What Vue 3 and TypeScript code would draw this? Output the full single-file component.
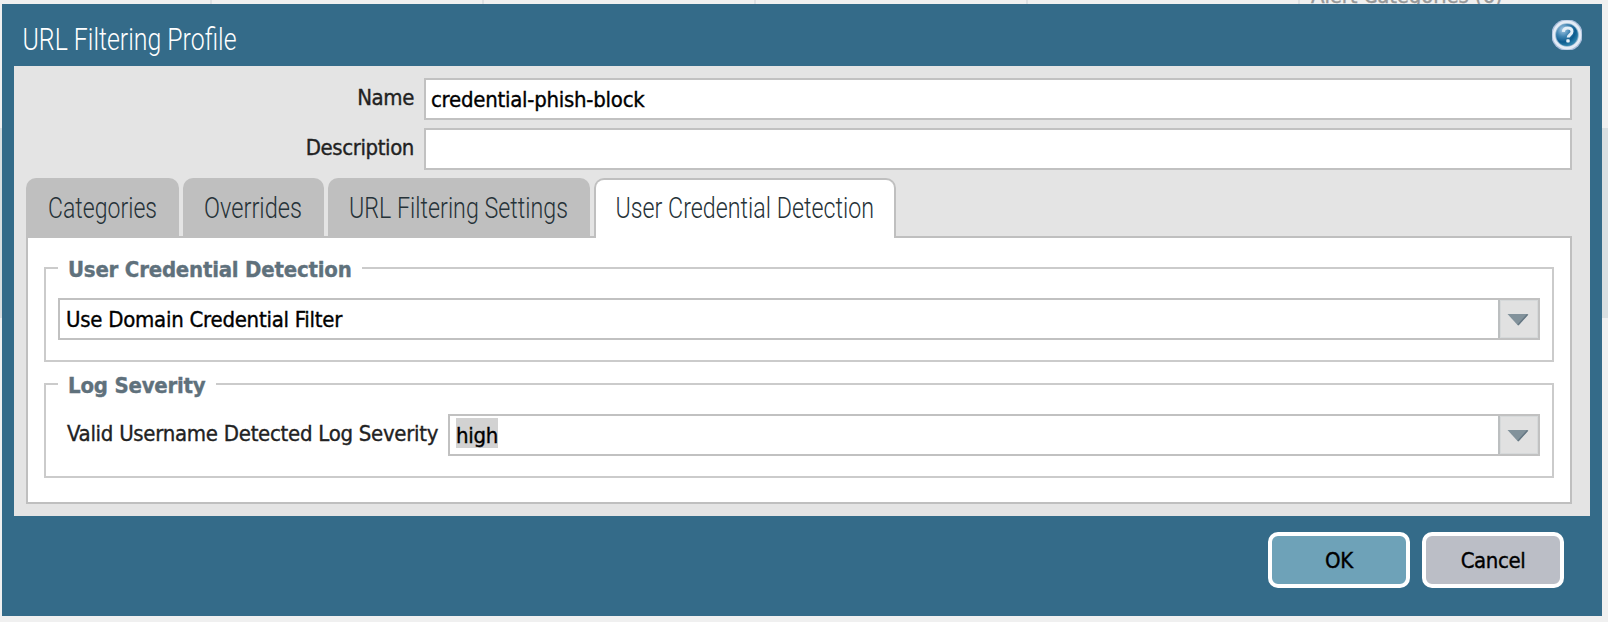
<script setup lang="ts">
import { ref } from 'vue'

interface Tab {
  id: string
  label: string
  width: number
  textX: number
  textLength: number
}

const tabs: Tab[] = [
  { id: 'categories', label: 'Categories', width: 153, textX: 22, textLength: 109 },
  { id: 'overrides', label: 'Overrides', width: 141, textX: 21, textLength: 98 },
  { id: 'settings', label: 'URL Filtering Settings', width: 262, textX: 21, textLength: 219 },
  { id: 'credential', label: 'User Credential Detection', width: 302, textX: 21.5, textLength: 258.5 },
]

const activeTab = ref('credential')
const name = ref('credential-phish-block')
const description = ref('')
const detectionMode = ref('Use Domain Credential Filter')
const severity = ref('high')
</script>

<template>
  <div class="page">
    <div class="backdrop">
      <div class="head-row">
        <span class="head-cell first"></span>
        <span class="head-cell"></span>
        <span class="head-cell"></span>
        <span class="head-cell"></span>
        <span class="head-cell"></span>
        <span class="head-cell last"><span class="head-text">Alert Categories (6)</span></span>
      </div>
      <div class="selected-row"></div>
    </div>

    <section class="dialog">
      <header class="title-bar">
        <svg class="title" width="300" height="62">
          <text x="20.500" y="46" textLength="214" lengthAdjust="spacingAndGlyphs">URL Filtering Profile</text>
        </svg>
        <svg class="help" width="30" height="30" viewBox="0 0 30 30">
          <defs>
            <radialGradient id="orb" cx="0.32" cy="0.26" r="0.75">
              <stop offset="0" stop-color="#a9cbe6" />
              <stop offset="0.4" stop-color="#4386b4" />
              <stop offset="0.75" stop-color="#0c5b8f" />
              <stop offset="1" stop-color="#2b80ab" />
            </radialGradient>
          </defs>
          <circle cx="15" cy="15" r="15.8" fill="#a9bedb" />
          <circle cx="15" cy="15" r="14.4" fill="#e4ecf6" />
          <circle cx="15" cy="15" r="11.8" fill="#8fb4cf" />
          <circle cx="15" cy="15" r="10.9" fill="url(#orb)" />
          <path d="M11.300 11.800C11.600 9 13.600 8 15.800 8c2.600 0 4.200 1.400 4.200 3.600 0 3-3.800 3.200-3.800 6" fill="none" stroke="#e4eff8" stroke-width="3" />
          <rect x="14.300" y="19.300" width="3.400" height="3.200" rx="0.8" fill="#e4eff8" />
        </svg>
      </header>

      <main class="body">
        <div class="row">
          <span class="label">Name</span>
          <div class="field">{{ name }}</div>
        </div>
        <div class="row">
          <span class="label">Description</span>
          <div class="field">{{ description }}</div>
        </div>

        <nav class="tabs">
          <div
            v-for="tab in tabs"
            :key="tab.id"
            class="tab"
            :class="{ active: tab.id === activeTab }"
            :style="{ width: tab.width + 'px' }"
            @click="activeTab = tab.id"
          >
            <svg class="tab-label" :width="tab.width" height="58">
              <text :x="tab.textX" y="40" :textLength="tab.textLength" lengthAdjust="spacingAndGlyphs">{{ tab.label }}</text>
            </svg>
          </div>
        </nav>

        <div class="panel">
          <div class="group">
            <span class="legend">User Credential Detection</span>
            <div class="combo">
              <span class="value">{{ detectionMode }}</span>
              <span class="trigger">
                <svg width="22" height="14" viewBox="0 0 22 14">
                  <path d="M0.500 1H21.500L11 12.500Z" fill="#82929b" />
                  <path d="M20.500 1.500L11 12" stroke="#657783" stroke-width="1.500" />
                </svg>
              </span>
            </div>
          </div>

          <div class="group">
            <span class="legend">Log Severity</span>
            <div class="inline">
              <span class="inline-label">Valid Username Detected Log Severity</span>
              <div class="combo">
                <span class="value"><mark>{{ severity }}</mark></span>
                <span class="trigger">
                  <svg width="22" height="14" viewBox="0 0 22 14">
                    <path d="M0.500 1H21.500L11 12.500Z" fill="#82929b" />
                    <path d="M20.500 1.500L11 12" stroke="#657783" stroke-width="1.500" />
                  </svg>
                </span>
              </div>
            </div>
          </div>
        </div>
      </main>

      <footer class="actions">
        <button class="btn primary">OK</button>
        <button class="btn">Cancel</button>
      </footer>
    </section>
  </div>
</template>

<style>
body {
  margin: 0;
  overflow: hidden;
}
</style>

<style scoped>
.page {
  position: relative;
  box-sizing: border-box;
  width: 1608px;
  height: 622px;
  padding: 4px 6px 6px 2px;
  overflow: hidden;
  background: #f0f0f0;
  font: 22px/26px "DejaVu Sans Condensed", "DejaVu Sans", "Noto Sans", sans-serif;
  letter-spacing: -0.26px;
  color: #222;
  -webkit-text-stroke: 0.35px currentColor;
}
.page * {
  box-sizing: border-box;
}
.backdrop {
  position: absolute;
  inset: 0;
}
.head-row {
  display: flex;
  height: 128px;
}
.head-cell {
  flex: 0 0 272px;
  border-right: 2px solid #dfe1e3;
}
.head-cell.first {
  flex-basis: 212px;
}
.head-cell.last {
  flex: 1;
  border-right: 0;
}
.head-text {
  display: block;
  margin: -17px 0 0 11px;
  color: #999;
  letter-spacing: -0.15px;
}
.selected-row {
  height: 190px;
  background: #d9dfe1;
}
.dialog {
  position: relative;
  display: flex;
  flex-direction: column;
  height: 612px;
  padding: 0 12px;
  background: #346b89;
}
.title-bar {
  display: flex;
  justify-content: space-between;
  height: 62px;
  margin: 0 -12px;
  padding-right: 20px;
}
.title,
.tab-label {
  overflow: visible;
}
.title text {
  font: 300 30.5px Roboto, sans-serif;
  letter-spacing: 0;
  fill: #fff;
  -webkit-text-stroke: 0.6px #fff;
}
.help {
  margin-top: 16px;
}
.body {
  display: flex;
  flex-direction: column;
  height: 450px;
  padding: 12px 18px 12px 12px;
  background: #e4e4e4;
}
.row {
  display: flex;
  height: 42px;
  margin-bottom: 8px;
}
.label {
  width: 388px;
  padding-top: 7px;
  text-align: right;
  letter-spacing: -0.4px;
}
.field {
  flex: 1;
  margin-left: 10px;
  padding: 7px 5px;
  border: 2px solid #c1c1c1;
  background: #fff;
  color: #000;
}
.tabs {
  display: flex;
  gap: 4px;
  height: 58px;
}
.tab {
  height: 58px;
  border-radius: 10px 10px 0 0;
  background: #bfbfbf;
}
.tab-label {
  display: block;
}
.tab.active {
  z-index: 1;
  height: 60px;
  border: 2px solid #bfbfbf;
  border-bottom: 0;
  background: #fff;
}
.tab.active .tab-label {
  margin: -2px 0 0 -2px;
}
.tab text {
  font: 300 29px Roboto, sans-serif;
  letter-spacing: 0;
  fill: #263238;
  -webkit-text-stroke: 0.6px #263238;
}
.panel {
  display: flex;
  flex: 1;
  flex-direction: column;
  gap: 21px;
  padding: 29px 16px 0;
  border: 2px solid #bfbfbf;
  background: #fff;
}
.group {
  position: relative;
  height: 95px;
  padding: 29px 12px 0;
  border: 2px solid #cbcbcb;
}
.legend {
  position: absolute;
  top: -12px;
  left: 12px;
  padding: 0 10px;
  background: #fff;
  color: #5f717c;
  font-weight: 700;
  letter-spacing: -0.22px;
}
.combo {
  display: flex;
  flex: 1;
  height: 42px;
  border: 2px solid #c1c1c1;
  background: #fff;
  color: #000;
}
.value {
  flex: 1;
  padding: 7px 6px;
}
.trigger {
  display: flex;
  flex: 0 0 40px;
  justify-content: center;
  padding: 13px 2px 0 0;
  border-left: 2px solid #bcbfc0;
  background: #e1e1e1;
  box-shadow: inset 0 0 0 1px #d6d9da;
}
.inline {
  display: flex;
}
.inline-label {
  width: 390px;
  padding: 7px 0 0 9px;
  white-space: nowrap;
  letter-spacing: -0.28px;
}
mark {
  display: inline-block;
  height: 30px;
  margin-top: -5px;
  padding-top: 5px;
  background: #d2d2d2;
  color: #000;
  line-height: 26px;
}
.actions {
  display: flex;
  gap: 12px;
  justify-content: flex-end;
  padding: 16px 26px 0 0;
}
.btn {
  width: 142px;
  height: 56px;
  padding: 2px 0 0;
  border: 4px solid #fff;
  border-radius: 10px;
  background: #bbbec6;
  color: #000;
  font: inherit;
  letter-spacing: -0.4px;
  -webkit-text-stroke: inherit;
}
.btn.primary {
  background: #6ea2b8;
}
</style>
